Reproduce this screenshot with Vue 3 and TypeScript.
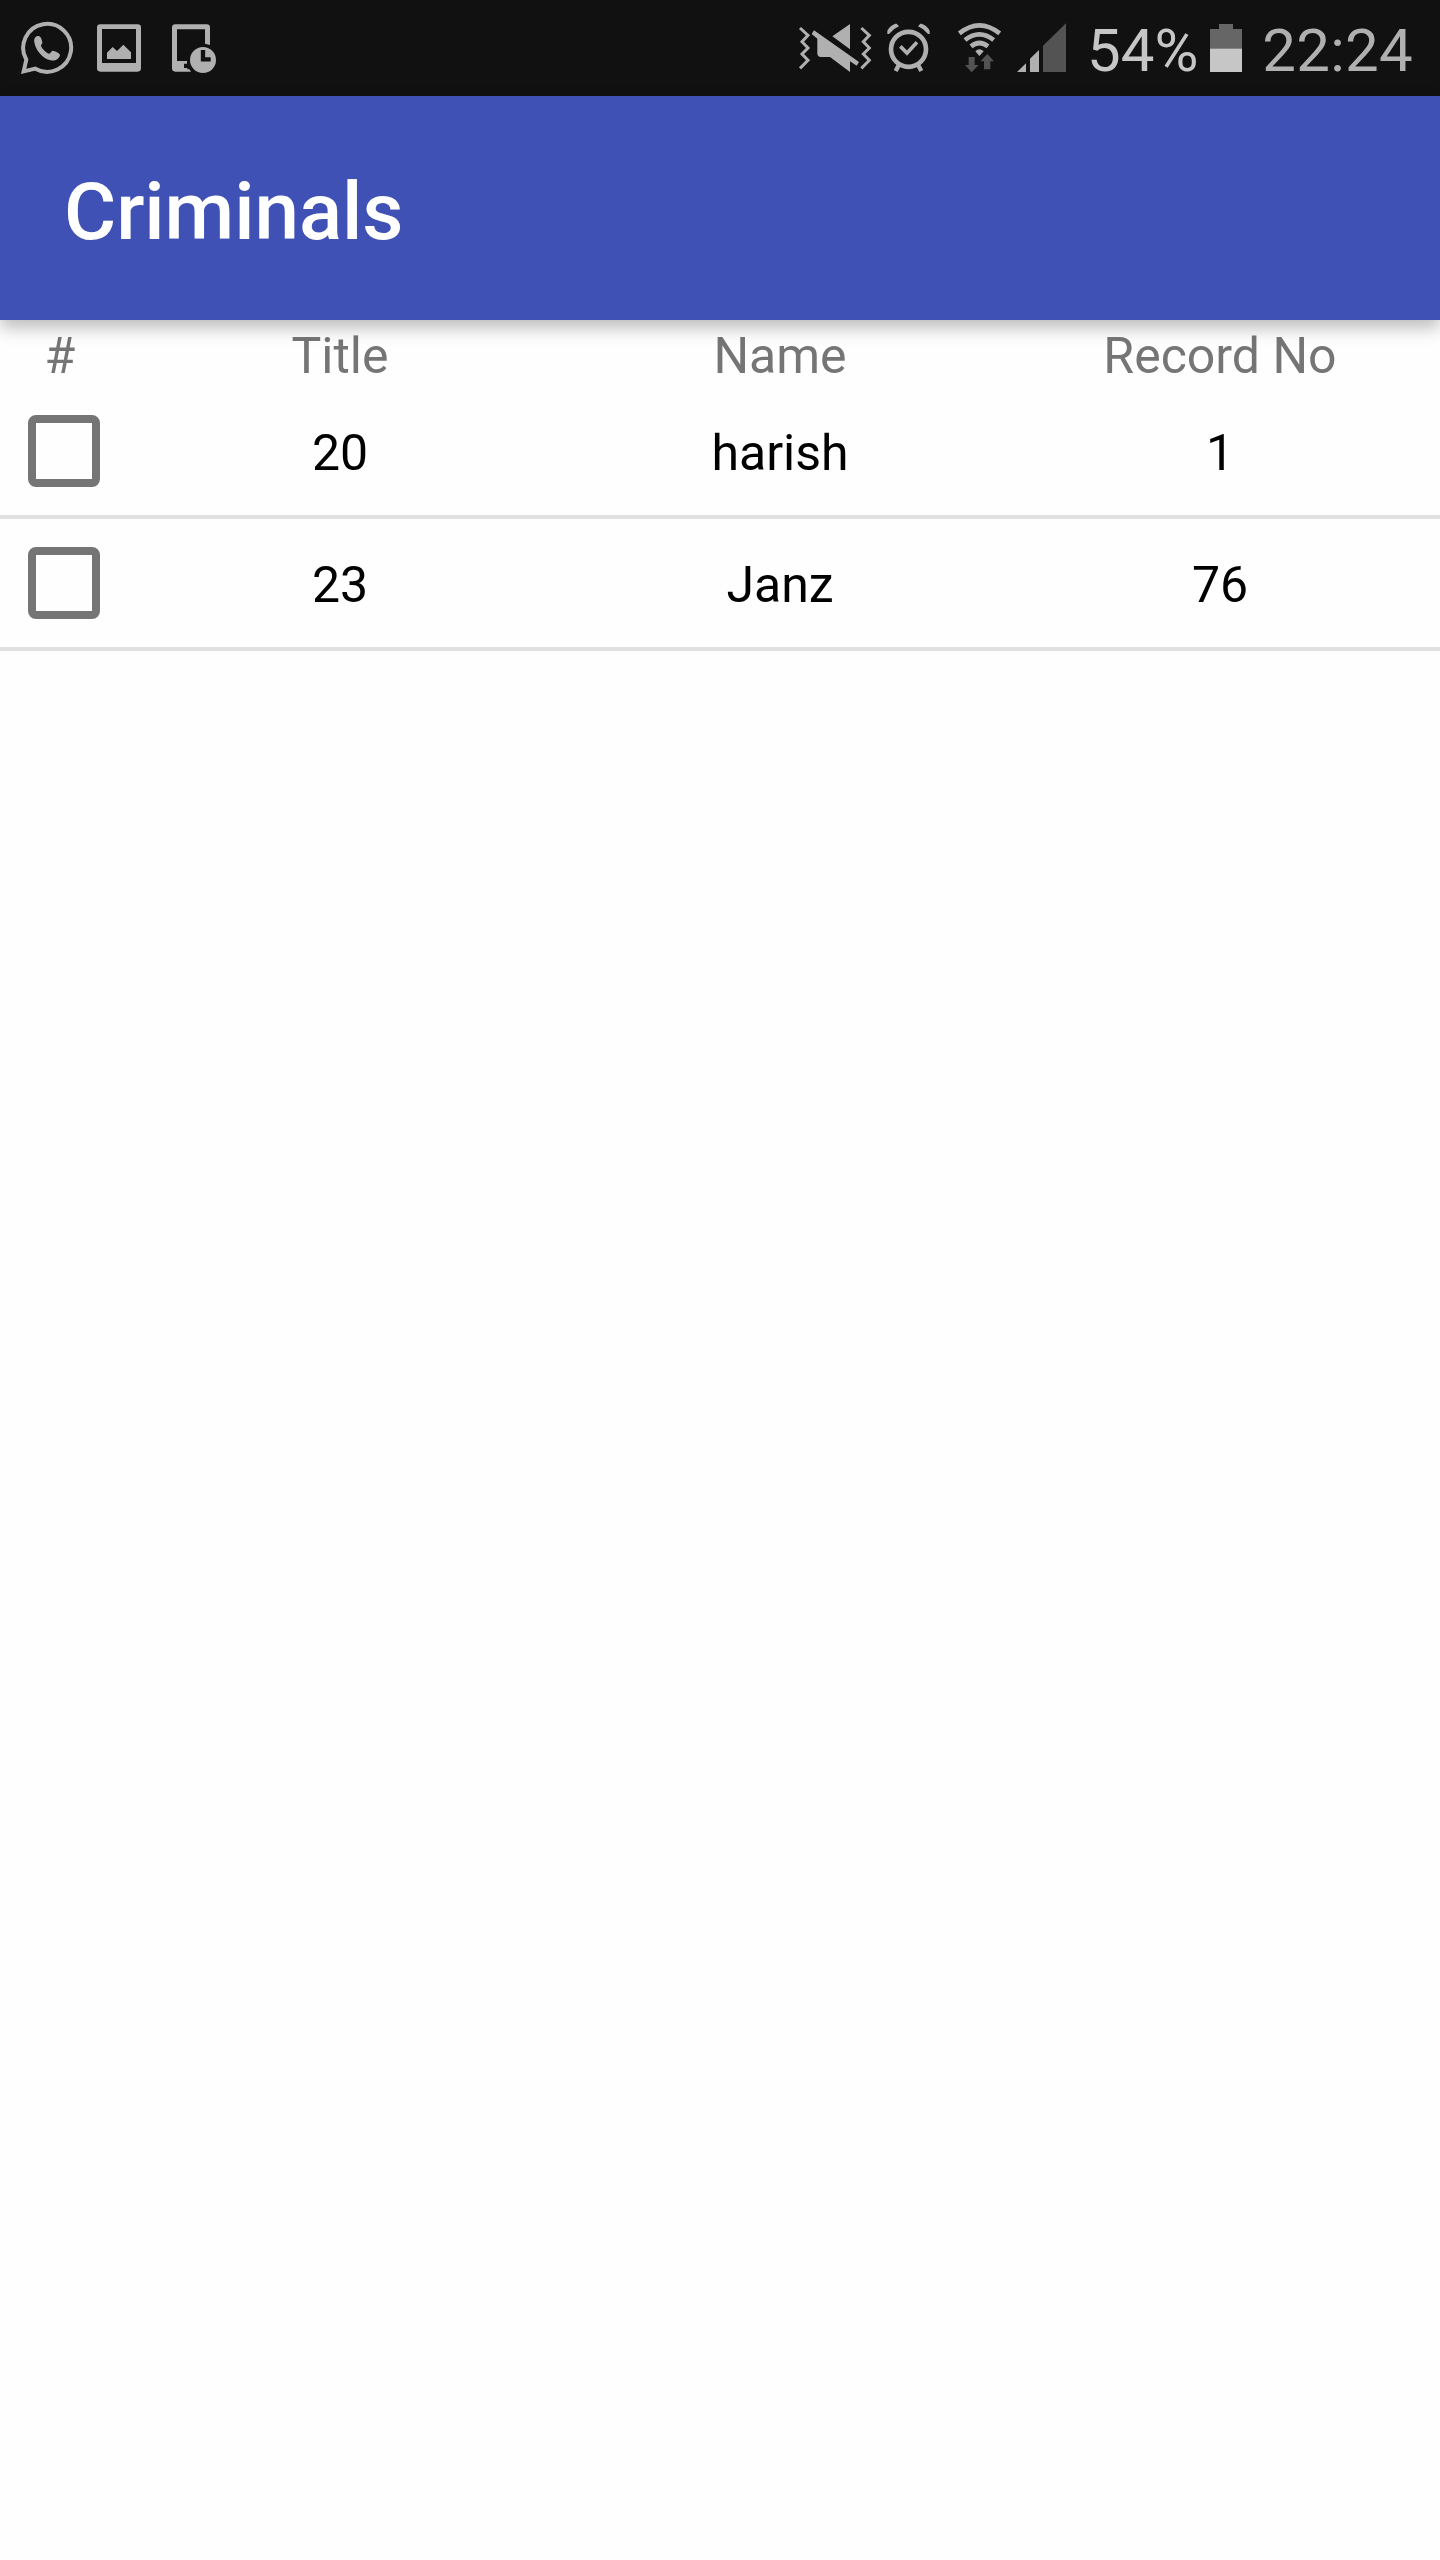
<script setup lang="ts">
interface Criminal {
  title: string
  name: string
  record: string
}

const headings: string[] = ['Title', 'Name', 'Record No']
const criminals: Criminal[] = [
  { title: '20', name: 'harish', record: '1' },
  { title: '23', name: 'Janz', record: '76' },
]
</script>

<template>
  <div class="screen">
    <div class="status">
      <!-- WhatsApp -->
      <svg class="icon first" width="65" height="96" viewBox="60 0 195 288">
        <path d="M79 179A71.900 71.900 0 1 1 106 206L71 214Z" fill="none" stroke="#b0b0b0" stroke-width="12" />
        <path d="M113 108C105 110 101 118 103 126C106 150 128 176 152 181C165 184 178 177 180 165C180 160 166 153 157 152C153 155 150 161 147 161C138 158 126 146 123 137C123 133 128 132 127 126C125 118 122 106 113 108Z" fill="#b0b0b0" />
      </svg>
      <!-- Screenshot -->
      <svg class="icon" width="75" height="96" viewBox="255 0 225 288">
        <path fill-rule="evenodd" d="M301 73H413Q423 73 423 83V205Q423 215 413 215H301Q291 215 291 205V83Q291 73 301 73ZM306 87V189H408V87Z" fill="#b0b0b0" />
        <path d="M321 177V158L338 141L351 153L370 134L393 157V177Z" fill="#b0b0b0" />
      </svg>
      <!-- Device with clock -->
      <svg class="icon" width="60" height="96" viewBox="480 0 180 288">
        <path d="M526 73H620Q630 73 630 83V135L615 131V88H531V183H561V191H552V204H562V208H568L573 215H526Q516 215 516 205V83Q516 73 526 73Z" fill="#b0b0b0" />
        <circle cx="609" cy="180" r="39" fill="#b0b0b0" />
        <path d="M609 150V178H632" fill="none" stroke="#111" stroke-width="13" />
      </svg>

      <div class="right">
        <!-- Muted, vibrating speaker -->
        <svg class="icon" width="84" height="96" viewBox="48 0 252 288">
          <path d="M60 84L84 106L66 125L84 144L66 162L84 181L60 205M244 84L268 106L250 125L268 144L250 162L268 181L244 205" fill="none" stroke="#b0b0b0" stroke-width="9" />
          <path d="M210 72V148L157 109ZM102 91L237 186L230 197L210 184V216L150 171H123Q112 171 112 160V116L95 102Z" fill="#b0b0b0" />
        </svg>
        <!-- Alarm -->
        <svg class="icon" width="52" height="96" viewBox="300 0 156 288">
          <g fill="none" stroke="#b0b0b0">
            <circle cx="385.500" cy="148" r="52.500" stroke-width="14" />
            <path d="M361 139L381 159L411 127" stroke-width="11" />
            <path d="M357 194L347 213M414 194L424 213" stroke-width="13" />
          </g>
          <path d="M322 102V92Q329 77 346 71H350L357 79Q340 86 327 102ZM449 102V92Q442 77 425 71H421L414 79Q431 86 444 102Z" fill="#b0b0b0" />
        </svg>
        <!-- Wi-Fi with traffic arrows -->
        <svg class="icon" width="80" height="96" viewBox="6 0 240 288">
          <g fill="none" stroke="#b0b0b0" stroke-width="14">
            <path d="M88 100Q148 52 209 100" />
            <path d="M105 120Q148 86 191 120" />
            <path d="M123 139Q148 119 174 139" />
          </g>
          <path d="M148 168L136 154Q148 141 161 154Z" fill="#b0b0b0" />
          <path d="M116 171H134V195H146L125 217L105 195H116ZM162 208V184H151L172 162L192 184H181V208Z" fill="#535353" />
        </svg>
        <!-- Cellular signal -->
        <svg class="icon" width="58" height="96" viewBox="246 0 174 288">
          <path d="M261 216L288 190V216ZM300 216V176L327 150V216Z" fill="#b0b0b0" />
          <path d="M339 216V137L408 70V216Z" fill="#535353" />
        </svg>
        <span class="percent">54%</span>
        <!-- Battery -->
        <svg class="icon" width="50" height="96" viewBox="390 0 150 288">
          <path d="M420 147V87H447V72H489V87H516V147Z" fill="#666" />
          <path d="M420 146H516V216H420Z" fill="#c6c6c6" />
        </svg>
        <span class="time">22:24</span>
      </div>
    </div>

    <header class="appbar">
      <h1>Criminals</h1>
    </header>

    <main>
      <div class="row head">
        <span>#</span>
        <span v-for="h in headings" :key="h">{{ h }}</span>
      </div>
      <div v-for="c in criminals" :key="c.title" class="row item">
        <i class="box"></i>
        <span>{{ c.title }}</span>
        <span>{{ c.name }}</span>
        <span>{{ c.record }}</span>
      </div>
    </main>
  </div>
</template>

<style>
body {
  background: #fefefe;
}
</style>

<style scoped>
.screen {
  width: 1440px;
  height: 2560px;
  overflow: hidden;
  background: #fefefe;
  font-family: Roboto, sans-serif;
}
.status {
  display: flex;
  height: 96px;
  background: #111;
}
.icon {
  display: block;
  flex: none;
}
.first {
  margin-left: 20px;
}
.right {
  display: flex;
  width: 644px;
  margin-left: auto;
}
.percent,
.time {
  box-sizing: border-box;
  flex: none;
  height: 96px;
  padding-top: 5px;
  font-size: 60px;
  line-height: 91px;
  white-space: nowrap;
}
.percent {
  width: 130px;
  padding-left: 17px;
  color: #c6c6c6;
}
.time {
  width: 190px;
  padding-left: 12.3px;
  color: #b0b0b0;
  letter-spacing: 0.25px;
}
.appbar {
  position: relative;
  display: flex;
  align-items: center;
  box-sizing: border-box;
  height: 224px;
  padding: 7px 64px 0;
  background: #3f51b5;
  box-shadow: 0 8px 16px rgba(0, 0, 0, 0.26);
}
h1 {
  margin: 0;
  color: #fff;
  font-size: 80px;
  font-weight: 500;
  line-height: 94px;
  letter-spacing: -0.1px;
}
.row {
  display: grid;
  grid-template-columns: 120px repeat(3, 440px);
  align-items: center;
  box-sizing: border-box;
  font-size: 50px;
  line-height: 60px;
  text-align: center;
}
.head {
  height: 67px;
  padding-top: 5px;
  color: #757575;
}
.item {
  height: 132px;
  border-bottom: 4px solid #e0e0e0;
  color: #000;
}
.item span {
  padding-top: 4px;
}
.box {
  box-sizing: border-box;
  width: 72px;
  height: 72px;
  margin-left: 28px;
  border: 8px solid #757575;
  border-radius: 8px;
}
</style>
